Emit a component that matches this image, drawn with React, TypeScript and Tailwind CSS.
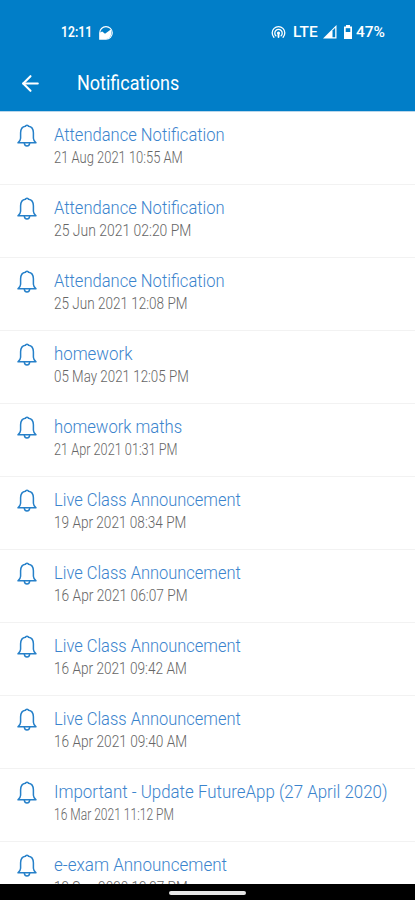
import { ArrowLeft } from 'lucide-react';

interface Notification {
  title: string;
  date: string;
  titleFit: string;
  dateFit: string;
}

const notifications: Notification[] = [
  { title: 'Attendance Notification', date: '21 Aug 2021 10:55 AM', titleFit: 'scale-x-[0.895]', dateFit: 'scale-x-[0.785]' },
  { title: 'Attendance Notification', date: '25 Jun 2021 02:20 PM', titleFit: 'scale-x-[0.895]', dateFit: 'scale-x-[0.844]' },
  { title: 'Attendance Notification', date: '25 Jun 2021 12:08 PM', titleFit: 'scale-x-[0.895]', dateFit: 'scale-x-[0.82]' },
  { title: 'homework', date: '05 May 2021 12:05 PM', titleFit: 'scale-x-[0.91]', dateFit: 'scale-x-[0.81]' },
  { title: 'homework maths', date: '21 Apr 2021 01:31 PM', titleFit: 'scale-x-[0.9]', dateFit: 'scale-x-[0.77]' },
  { title: 'Live Class Announcement', date: '19 Apr 2021 08:34 PM', titleFit: 'scale-x-[0.89]', dateFit: 'scale-x-[0.824]' },
  { title: 'Live Class Announcement', date: '16 Apr 2021 06:07 PM', titleFit: 'scale-x-[0.89]', dateFit: 'scale-x-[0.832]' },
  { title: 'Live Class Announcement', date: '16 Apr 2021 09:42 AM', titleFit: 'scale-x-[0.89]', dateFit: 'scale-x-[0.826]' },
  { title: 'Live Class Announcement', date: '16 Apr 2021 09:40 AM', titleFit: 'scale-x-[0.89]', dateFit: 'scale-x-[0.828]' },
  { title: 'Important - Update FutureApp (27 April 2020)', date: '16 Mar 2021 11:12 PM', titleFit: 'scale-x-[0.913]', dateFit: 'scale-x-[0.73]' },
  { title: 'e-exam Announcement', date: '12 Sep 2020 12:27 PM', titleFit: 'scale-x-[0.92]', dateFit: 'scale-x-[0.82]' },
];

function BellIcon() {
  return (
    <svg viewBox="0 0 20 24" className="ml-[17px] mt-[11.5px] h-[24px] w-[20px] shrink-0" fill="none" stroke="#2680c9" strokeWidth="1.5" strokeLinejoin="round" strokeLinecap="round">
      <path d="M1 18.8h18c-1.6-1.3-2.5-2.6-2.6-4.6V8.8C16.3 5.2 14.2 2.6 11.6 2.3 11.4 1.6 10.8 1.3 10 1.3s-1.4.3-1.6 1C5.8 2.6 3.7 5.2 3.6 8.8v5.4c-.1 2-1 3.3-2.6 4.6z" />
      <path d="M7.3 19.2c.2 1.6 1.2 2.9 2.7 2.9s2.5-1.3 2.7-2.9" />
    </svg>
  );
}

function StatusBar() {
  return (
    <div className="flex h-[56px] items-start pt-[24px] text-white">
      <span className="ml-[61px] w-[31px] origin-left whitespace-nowrap text-[15px] font-semibold leading-[17px] scale-x-[0.81]">12:11</span>
      <svg viewBox="0 0 14 14" className="ml-[7px] mt-[2px] h-[14px] w-[14px]" fill="none">
        <path d="M.7 13.2V7a6.3 6.3 0 1 1 6.3 6.2z" stroke="white" strokeWidth="1.1" />
        <path d="M1 13V6.5l2.2-1 2.8 2.3 5.8-4.3c1.8 4.6-.6 9.5-4.8 9.5z" fill="white" />
      </svg>
      <svg viewBox="0 0 15 14" className="ml-[158px] mt-[1px] h-[14px] w-[15px]" fill="none" stroke="white" strokeWidth="1.3" strokeLinecap="round">
        <path d="M2.9 12.2a6.3 6.3 0 1 1 9.2 0" />
        <path d="M4.9 10.8a3.7 3.7 0 1 1 5.2 0" />
        <path d="M7.5 8v4" strokeWidth="1.8" />
        <circle cx="7.5" cy="8" r="1.5" fill="white" stroke="none" />
      </svg>
      <span className="ml-[7px] w-[25px] origin-left whitespace-nowrap text-[15px] font-medium leading-[17px] scale-x-[1.03]">LTE</span>
      <svg viewBox="0 0 14 14" className="ml-[5px] mt-[1px] h-[14px] w-[14px]">
        <path d="M0 13.5 13.5 0v13.5z" fill="white" />
        <path d="M9.5 5.5 12.2 2.8v9.4H9.5z" fill="#017ec8" />
      </svg>
      <svg viewBox="0 0 10 15" className="ml-[6px] h-[15px] w-[10px]">
        <path d="M3 1h4v1.5h2V15H1V2.5h2z" fill="white" />
        <path d="M2.7 4.2h4.6v3.8H2.7z" fill="#017ec8" />
      </svg>
      <span className="ml-[3px] origin-left whitespace-nowrap text-[15px] font-medium leading-[17px] scale-x-[1.03]">47%</span>
    </div>
  );
}

function NotificationRow({ item }: { item: Notification }) {
  return (
    <li className="flex h-[73.05px] items-start border-b border-[#f2f2f2]">
      <BellIcon />
      <div className="ml-[17px] whitespace-nowrap pt-[11px] font-light">
        <p className="leading-[24px]">
          <span className={`inline-block origin-left text-[18.5px] text-[#3b84cd] ${item.titleFit}`}>{item.title}</span>
        </p>
        <p className="leading-[20px]">
          <span className={`inline-block origin-left text-[16.5px] text-[#666] ${item.dateFit}`}>{item.date}</span>
        </p>
      </div>
    </li>
  );
}

export default function App() {
  return (
    <div className="flex h-[900px] w-[415px] flex-col overflow-hidden bg-white font-['Roboto',sans-serif]">
      <header className="h-[111px] shrink-0 bg-[#017ec8] text-white">
        <StatusBar />
        <div className="flex h-[54px] items-center">
          <ArrowLeft className="ml-[18px] size-[25px]" strokeWidth={2} />
          <h1 className="ml-[34px] origin-left text-[20px] leading-[28px] scale-x-[0.9]">Notifications</h1>
        </div>
      </header>
      <ul className="min-h-0 flex-1 overflow-hidden border-t border-[#b9d6ea]">
        {notifications.map((item, index) => (
          <NotificationRow key={index} item={item} />
        ))}
      </ul>
      <footer className="flex h-[16px] shrink-0 justify-center bg-black pt-[7px]">
        <div className="h-[4px] w-[77px] rounded-full bg-[#e6e6e6]" />
      </footer>
    </div>
  );
}
